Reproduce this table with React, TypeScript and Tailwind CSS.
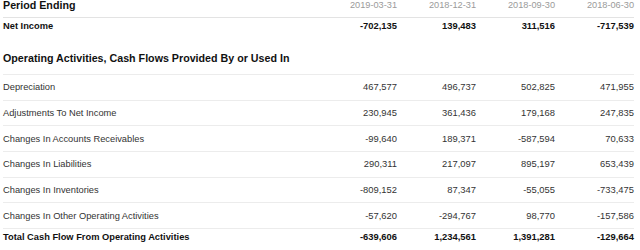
const dates = ['2019-03-31', '2018-12-31', '2018-09-30', '2018-06-30']

const rows: { label: string; values: string[] }[] = [
  { label: 'Depreciation', values: ['467,577', '496,737', '502,825', '471,955'] },
  { label: 'Adjustments To Net Income', values: ['230,945', '361,436', '179,168', '247,835'] },
  { label: 'Changes In Accounts Receivables', values: ['-99,640', '189,371', '-587,594', '70,633'] },
  { label: 'Changes In Liabilities', values: ['290,311', '217,097', '895,197', '653,439'] },
  { label: 'Changes In Inventories', values: ['-809,152', '87,347', '-55,055', '-733,475'] },
  { label: 'Changes In Other Operating Activities', values: ['-57,620', '-294,767', '98,770', '-157,586'] },
]

function Cells({ values, className }: { values: string[]; className: string }) {
  return (
    <>
      {values.map((v, i) => (
        <div key={i} className={`w-[79px] shrink-0 text-right ${className}`}>
          {v}
        </div>
      ))}
    </>
  )
}

export default function App() {
  return (
    <div className="w-[640px] h-[250px] overflow-hidden bg-white font-['Liberation_Sans',Arial,sans-serif]">
      <div className="ml-[3px] w-[631px]">
        {/* header */}
        <div className="flex h-[18px] items-start border-b border-[#e3e3e3]">
          <div className="flex-1 -mt-[1px] text-[10.7px] leading-[12px] font-bold text-[#111]">
            Period Ending
          </div>
          <Cells values={dates} className="-mt-[1px] text-[9.2px] leading-[12px] text-[#9a9a9a]" />
        </div>

        {/* net income */}
        <div className="flex h-[14px] items-start pt-[2px]">
          <div className="flex-1 text-[9.3px] leading-[12px] font-bold text-[#111]">Net Income</div>
          <Cells
            values={['-702,135', '139,483', '311,516', '-717,539']}
            className="text-[9.4px] leading-[12px] font-bold text-[#111]"
          />
        </div>

        {/* section */}
        <div className="h-[43px] border-b border-[#ececec] pt-[20px]">
          <div className="text-[10.7px] leading-[13px] font-bold text-[#111]">
            Operating Activities, Cash Flows Provided By or Used In
          </div>
        </div>

        {rows.map((r) => (
          <div key={r.label} className="flex h-[25.7px] items-center border-b border-[#ececec]">
            <div className="flex-1 text-[9.3px] leading-[12px] text-[#333]">{r.label}</div>
            <Cells values={r.values} className="text-[9.4px] leading-[12px] text-[#333]" />
          </div>
        ))}

        {/* total */}
        <div className="flex items-start pt-[2px]">
          <div className="flex-1 text-[9.3px] leading-[12px] font-bold text-[#111]">
            Total Cash Flow From Operating Activities
          </div>
          <Cells
            values={['-639,606', '1,234,561', '1,391,281', '-129,664']}
            className="text-[9.4px] leading-[12px] font-bold text-[#111]"
          />
        </div>
      </div>
    </div>
  )
}
